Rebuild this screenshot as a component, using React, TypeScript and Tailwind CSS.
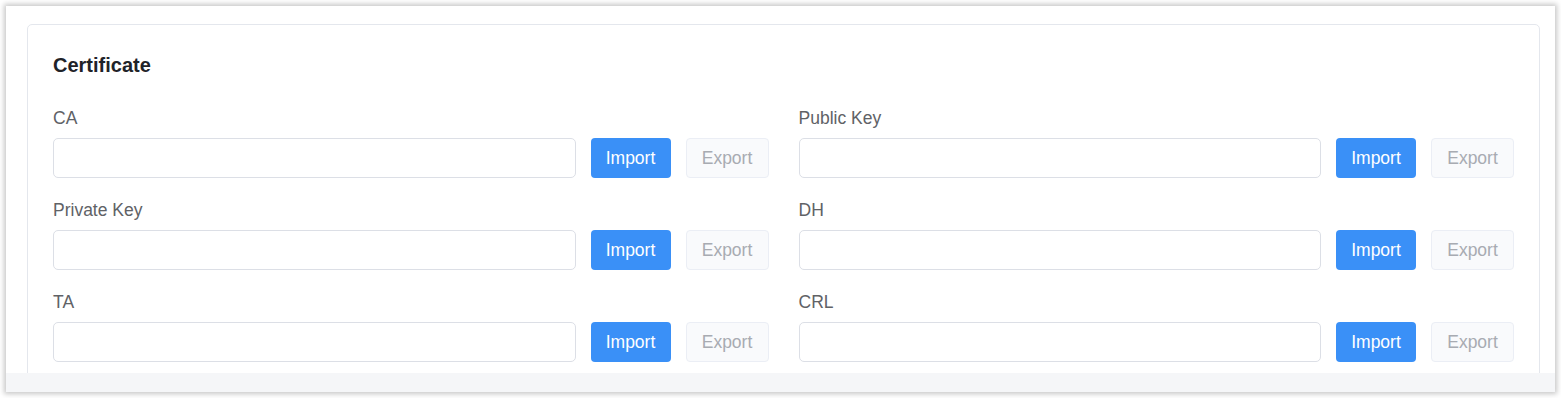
import React from 'react';

const rows = [
  ['CA', 'Public Key'],
  ['Private Key', 'DH'],
  ['TA', 'CRL'],
];

const Field = ({ label }: { label: string }) => (
  <div className="flex flex-col">
    <label className="h-6 leading-6 text-[17.5px] text-[#606266] mb-2">{label}</label>
    <div className="flex items-center">
      <input
        type="text"
        className="h-10 flex-1 min-w-0 rounded-[5px] border border-[#dcdfe6] bg-white px-3 outline-none"
      />
      <button className="ml-[15px] h-10 w-20 rounded-[4px] bg-[#3a90f7] text-[17.5px] text-white">
        Import
      </button>
      <button
        disabled
        className="ml-[15px] h-10 w-[83px] rounded-[4px] border border-[#ebeef5] bg-[#f9fafc] text-[17.5px] text-[#a8abb2]"
      >
        Export
      </button>
    </div>
  </div>
);

const App = () => {
  return (
    <div className="min-h-screen bg-white p-[6px] font-['Liberation_Sans',Arial,sans-serif]">
      <div className="flex h-[386px] flex-col overflow-hidden bg-white shadow-[0_0_5px_2px_rgba(0,0,0,0.22)]">
        <div className="h-[367px] overflow-hidden pl-[21px] pr-[15px] pt-[18px]">
          <div className="rounded-[5px] border border-[#e4e7ed] bg-white px-[25px] pt-[29px] pb-6">
            <h2 className="mb-[30px] text-[20px] leading-[22px] font-bold text-[#1f2329]">Certificate</h2>
            <div className="flex flex-col gap-5">
              {rows.map((row, i) => (
                <div key={i} className="grid grid-cols-2 gap-[30px]">
                  <Field label={row[0]} />
                  <Field label={row[1]} />
                </div>
              ))}
            </div>
          </div>
        </div>
        <div className="h-[19px] bg-[#f5f6f8]" />
      </div>
    </div>
  );
};

export default App;
